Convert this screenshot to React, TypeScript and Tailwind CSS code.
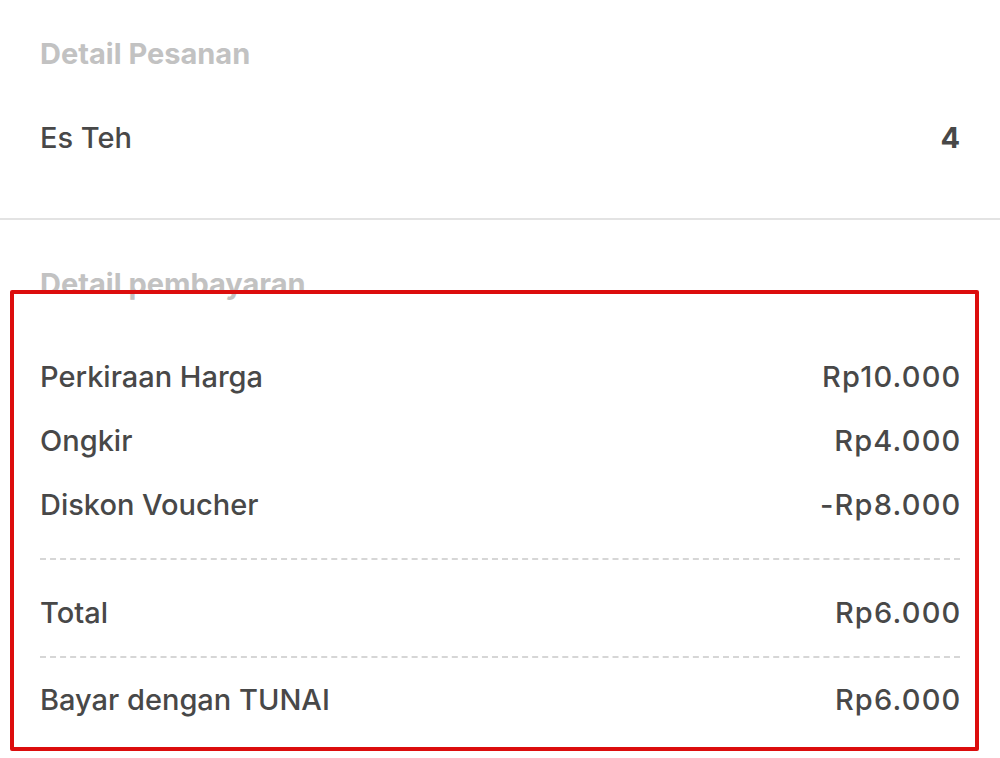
import React from "react";

const Row = ({ label, value }: { label: string; value: string }) => (
  <div className="flex items-center justify-between h-[64px] text-[29px] font-medium text-[#484848]">
    <span>{label}</span>
    <span className="tracking-[1.2px] -mr-[1.5px]">{value}</span>
  </div>
);

const Dashed = () => (
  <div className="h-0 border-t-2 border-dashed border-[#d6d6d6]" />
);

export default function App() {
  return (
    <div
      className="relative w-[1000px] h-[758px] bg-white overflow-hidden"
      style={{ fontFamily: "Inter, Roboto, 'Liberation Sans', sans-serif" }}
    >
      <div className="px-[40px] pt-[34px]">
        <div className="text-[29px] font-bold text-[#c2c2c2] leading-[40px]">Detail Pesanan</div>
        <div className="flex items-center justify-between mt-[44px] h-[40px] text-[29px] font-medium text-[#484848]">
          <span>Es Teh</span>
          <span className="font-bold">4</span>
        </div>
      </div>
      <div className="mt-[60px] h-[2px] bg-[#e3e3e3]" />
      <div className="px-[40px] pt-[44px]">
        <div className="text-[29px] font-bold text-[#c2c2c2] leading-[40px]">Detail pembayaran</div>
        <div className="mt-[41px]">
          <Row label="Perkiraan Harga" value="Rp10.000" />
          <Row label="Ongkir" value="Rp4.000" />
          <Row label="Diskon Voucher" value="-Rp8.000" />
        </div>
        <div className="mt-[21px]"><Dashed /></div>
        <div className="mt-[21px]"><Row label="Total" value="Rp6.000" /></div>
        <div className="mt-[11px]"><Dashed /></div>
        <div className="mt-[10px]"><Row label="Bayar dengan TUNAI" value="Rp6.000" /></div>
      </div>
      <div className="absolute left-[10px] top-[290px] w-[969px] h-[461px] border-[4px] border-[#dc0d0d] rounded-[2px] pointer-events-none" />
    </div>
  );
}
